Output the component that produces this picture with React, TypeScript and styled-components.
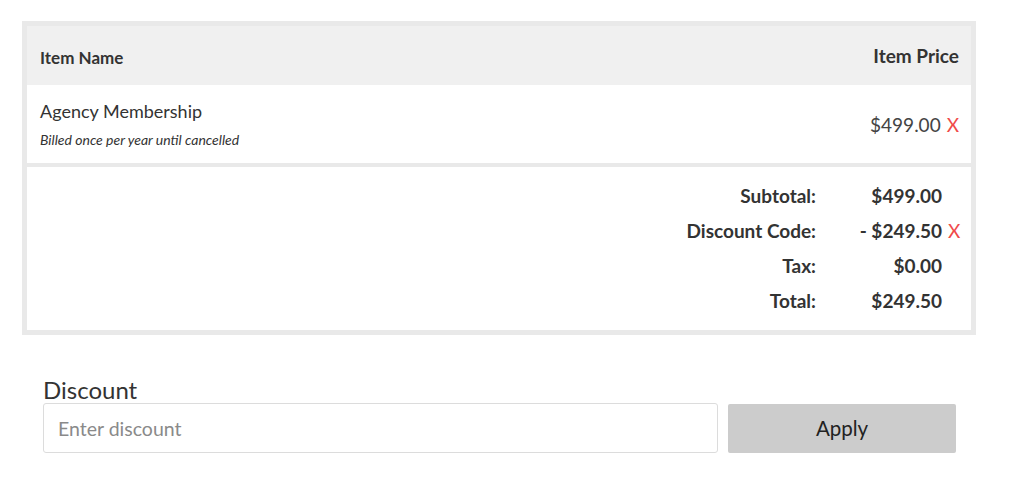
import React from "react";
import styled, { createGlobalStyle } from "styled-components";

const Global = createGlobalStyle`
  html, body { margin: 0; padding: 0; background: #fff; }
  body { font-family: Lato, "Noto Sans", sans-serif; color: #333; }
  * { box-sizing: border-box; }
`;

const Page = styled.div`
  padding: 21px 0 0 22px;
`;

const Cart = styled.div`
  width: 954px;
  border: 5px solid #e9e9e9;
  background: #fff;
`;

const HeadRow = styled.div`
  display: flex;
  justify-content: space-between;
  align-items: center;
  height: 59px;
  padding: 0 12px 0 13px;
  background: #f0f0f0;
  font-weight: 700;
  color: #333;
`;

const HeadCell = styled.div<{ $size: number; $shift?: number }>`
  font-size: ${(p) => p.$size}px;
  margin-top: ${(p) => p.$shift ?? 0}px;
`;

const ItemRow = styled.div`
  display: flex;
  justify-content: space-between;
  align-items: center;
  height: 82px;
  padding: 0 12px 0 13px;
  border-bottom: 4px solid #e9e9e9;
`;

const ItemInfo = styled.div`
  display: flex;
  flex-direction: column;
  gap: 9px;
  margin-top: -1px;
`;

const ItemName = styled.div`
  font-size: 18px;
  color: #333;
`;

const ItemNote = styled.div`
  font-size: 14px;
  font-style: italic;
  color: #333;
`;

const Price = styled.div`
  font-size: 19px;
  color: #444;
  display: flex;
  align-items: center;
  gap: 6px;
`;

const Remove = styled.span`
  color: #f04a4a;
  font-weight: 400;
  font-size: 19px;
`;

const Summary = styled.div`
  display: grid;
  grid-template-columns: 1fr 126px 17px;
  padding: 11px 12px 12px 13px;
  grid-auto-rows: 35px;
  align-items: center;
  font-size: 19px;
  font-weight: 700;
  color: #333;
`;

const Label = styled.div`
  text-align: right;
`;

const Value = styled.div`
  text-align: right;
`;

const XCell = styled.div`
  padding-left: 6px;
  font-weight: 400;
`;

const DiscountBlock = styled.div`
  margin: 42px 0 0 21px;
  width: 913px;
`;

const DiscountLabel = styled.div`
  font-size: 24px;
  color: #333;
  line-height: 26px;
`;

const FieldRow = styled.div`
  display: flex;
  gap: 10px;
  align-items: center;
`;

const Input = styled.input`
  width: 675px;
  height: 50px;
  border: 1px solid #dcdcdc;
  border-radius: 3px;
  padding: 0 14px;
  font-family: Lato, "Noto Sans", sans-serif;
  font-size: 19.5px;
  color: #333;
  outline: none;
  &::placeholder { color: #8a8a8a; }
`;

const ApplyButton = styled.button`
  width: 228px;
  height: 49px;
  border: none;
  border-radius: 2px;
  background: #cccccc;
  color: #222;
  font-family: Lato, "Noto Sans", sans-serif;
  font-size: 20.5px;
  cursor: pointer;
`;

const totals = [
  { label: "Subtotal:", value: "$499.00", removable: false },
  { label: "Discount Code:", value: "- $249.50", removable: true },
  { label: "Tax:", value: "$0.00", removable: false },
  { label: "Total:", value: "$249.50", removable: false },
];

export default function App() {
  return (
    <Page>
      <Global />
      <Cart>
        <HeadRow>
          <HeadCell $size={17} $shift={3}>Item Name</HeadCell>
          <HeadCell $size={19}>Item Price</HeadCell>
        </HeadRow>
        <ItemRow>
          <ItemInfo>
            <ItemName>Agency Membership</ItemName>
            <ItemNote>Billed once per year until cancelled</ItemNote>
          </ItemInfo>
          <Price>
            $499.00 <Remove>X</Remove>
          </Price>
        </ItemRow>
        <Summary>
          {totals.map((t) => (
            <React.Fragment key={t.label}>
              <Label>{t.label}</Label>
              <Value>{t.value}</Value>
              <XCell>{t.removable ? <Remove>X</Remove> : null}</XCell>
            </React.Fragment>
          ))}
        </Summary>
      </Cart>
      <DiscountBlock>
        <DiscountLabel>Discount</DiscountLabel>
        <FieldRow>
          <Input placeholder="Enter discount" />
          <ApplyButton>Apply</ApplyButton>
        </FieldRow>
      </DiscountBlock>
    </Page>
  );
}
